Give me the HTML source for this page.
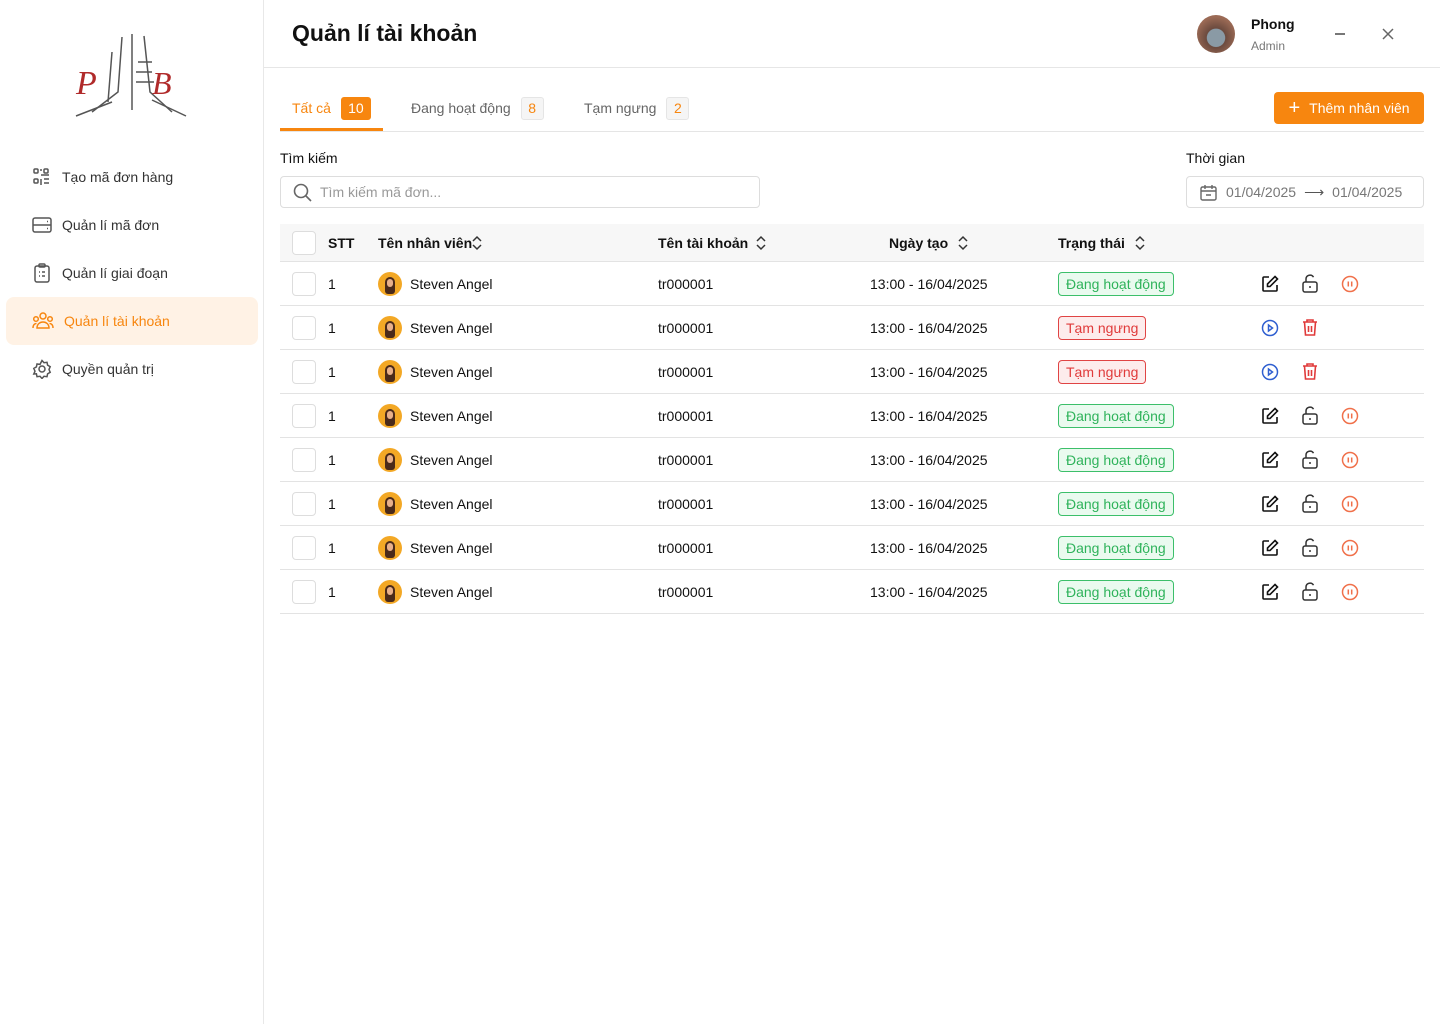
<!DOCTYPE html>
<html><head><meta charset="utf-8"><style>
*{box-sizing:border-box;margin:0;padding:0}
body{width:1440px;height:1024px;font-family:"Liberation Sans",sans-serif;background:#fff;position:relative;overflow:hidden;color:#111}
.abs{position:absolute}
.side{left:0;top:0;width:264px;height:1024px;border-right:1px solid #e8e8e8}
.nav{position:absolute;left:6px;width:252px;height:48px;display:flex;align-items:center;padding-left:26px;font-size:14px;color:#333;border-radius:8px}
.nav svg{margin-right:10px}
.nav.act{background:#FFF2E5;color:#F7860F}
.hdr{left:264px;top:0;width:1176px;height:68px;border-bottom:1px solid #e6e6e6}
.tab{position:absolute;top:96px;font-size:14px;color:#666;display:flex;align-items:center;height:24px}
.cnt{margin-left:10px;min-width:23px;height:23px;border-radius:3px;border:1px solid #e5e5e5;background:#f5f5f5;color:#F7860F;font-size:14px;display:flex;align-items:center;justify-content:center;padding:0 5px}
.row{position:absolute;left:280px;width:1144px;height:44px;border-bottom:1px solid #e3e3e3;font-size:14px;color:#111}
.row>*{position:absolute}
.cb{left:12px;top:10px;width:24px;height:24px;border:1px solid #ddd;border-radius:4px;background:#fff}
.badge{left:778px;top:10px;height:24px;border-radius:4px;font-size:14px;padding:0 7px;line-height:22px}
.g{border:1px solid #3cbf6a;background:#eafaef;color:#2fb35b}
.r{border:1px solid #e04444;background:#fdecec;color:#e03a3a}
.av{left:98px;top:10px;width:24px;height:24px;border-radius:50%;background:#f3a825;overflow:hidden}
</style></head><body>
<div class="abs side">
 <svg class="abs" style="left:72px;top:32px" width="118" height="86" viewBox="0 0 118 86">
  <g stroke="#555" fill="none" stroke-width="1.5"><path d="M50 5 L46 60 L20 80"/><path d="M60 2 L60 78"/><path d="M72 4 L78 60 L100 80"/><path d="M66 30 L80 30 M64 40 L80 40 M64 50 L82 50"/><path d="M40 20 L36 70"/><path d="M4 84 L40 70 M114 84 L80 68"/></g>
  <text x="4" y="62" font-family="Liberation Serif" font-style="italic" font-size="34" fill="#b02a2a">P</text>
  <text x="80" y="62" font-family="Liberation Serif" font-style="italic" font-size="32" fill="#b02a2a">B</text>
 </svg>
 <div class="nav" style="top:153px"><svg width="20" height="20" viewBox="0 0 20 20" fill="none" stroke="#555" stroke-width="1.5"><rect x="2" y="2" width="4" height="4" rx="1"/><rect x="12" y="2" width="4" height="4" rx="1"/><rect x="2" y="12" width="4" height="4" rx="1"/><path d="M9 2v2M9 8h8M12 12h5M12 16h5M9 12v6"/></svg>Tạo mã đơn hàng</div>
 <div class="nav" style="top:201px"><svg width="20" height="20" viewBox="0 0 20 20" fill="none" stroke="#555" stroke-width="1.5"><rect x="1" y="3" width="18" height="14" rx="2"/><path d="M1 10h18M15 6.5h1M15 13.5h1"/></svg>Quản lí mã đơn</div>
 <div class="nav" style="top:249px"><svg width="20" height="20" viewBox="0 0 20 20" fill="none" stroke="#555" stroke-width="1.5"><rect x="3" y="3" width="14" height="16" rx="2"/><rect x="7" y="1" width="6" height="3" rx="1"/><path d="M7 9h1M10 9h3M7 13h1M10 13h3"/></svg>Quản lí giai đoạn</div>
 <div class="nav act" style="top:297px"><svg width="22" height="20" viewBox="0 0 22 20" fill="none" stroke="#F7860F" stroke-width="1.5"><circle cx="11" cy="5" r="3"/><circle cx="4" cy="8" r="2.3"/><circle cx="18" cy="8" r="2.3"/><path d="M5 17c0-4 3-6 6-6s6 2 6 6zM1 17c0-3 1.5-4.5 3.5-4.5M21 17c0-3-1.5-4.5-3.5-4.5"/></svg>Quản lí tài khoản</div>
 <div class="nav" style="top:345px"><svg width="20" height="20" viewBox="0 0 20 20" fill="none" stroke="#555" stroke-width="1.5"><circle cx="10" cy="10" r="3"/><path d="M10 1.5l2 2.2 3-.4.6 2.9 2.6 1.5-1.2 2.8 1.2 2.8-2.6 1.5-.6 2.9-3-.4-2 2.2-2-2.2-3 .4-.6-2.9L1.8 15l1.2-2.8L1.8 9.4l2.6-1.5.6-2.9 3 .4z"/></svg>Quyền quản trị</div>
</div>
<div class="abs hdr">
 <div class="abs" style="left:28px;top:20px;font-size:23px;font-weight:bold;color:#111">Quản lí tài khoản</div>
 <div class="abs" style="left:933px;top:15px;width:38px;height:38px;border-radius:50%;background:radial-gradient(circle at 50% 60%,#8a9aa5 0 30%,#6b4a3e 32%,#9b6a55 70%)"></div>
 <div class="abs" style="left:987px;top:16px;font-size:14px;font-weight:bold">Phong</div>
 <div class="abs" style="left:987px;top:39px;font-size:12px;color:#777">Admin</div>
 <div class="abs" style="left:1071px;top:33px;width:10px;height:1.5px;background:#777"></div>
 <svg class="abs" style="left:1118px;top:28px" width="12" height="12" viewBox="0 0 12 12" stroke="#666" stroke-width="1.5"><path d="M1 1l10 10M11 1L1 11"/></svg>
</div>
<div class="tab" style="left:292px;color:#F7860F">Tất cả<span class="cnt" style="background:#F7860F;color:#fff;border-color:#F7860F;width:30px">10</span></div>
<div class="tab" style="left:411px">Đang hoạt động<span class="cnt">8</span></div>
<div class="tab" style="left:584px">Tạm ngưng<span class="cnt">2</span></div>
<div class="abs" style="left:280px;top:131px;width:1144px;height:1px;background:#e5e5e5"></div>
<div class="abs" style="left:280px;top:128px;width:103px;height:3px;background:#F7860F"></div>
<div class="abs" style="left:1274px;top:92px;width:150px;height:32px;background:#F7860F;border-radius:4px;color:#fff;font-size:14px;display:flex;align-items:center;justify-content:center"><span style="font-size:20px;margin-right:9px;font-weight:300">+</span>Thêm nhân viên</div>
<div class="abs" style="left:280px;top:150px;font-size:14px">Tìm kiếm</div>
<div class="abs" style="left:280px;top:176px;width:480px;height:32px;border:1px solid #ddd;border-radius:4px;font-size:14px;color:#999;padding:7px 0 0 39px">Tìm kiếm mã đơn...
 <svg class="abs" style="left:12px;top:6px" width="19" height="19" viewBox="0 0 19 19" fill="none" stroke="#666" stroke-width="1.6"><circle cx="8" cy="8" r="6.5"/><path d="M13 13l5 5"/></svg></div>
<div class="abs" style="left:1186px;top:150px;font-size:14px">Thời gian</div>
<div class="abs" style="left:1186px;top:176px;width:238px;height:32px;border:1px solid #ddd;border-radius:4px;font-size:14px;color:#777;padding:7px 0 0 39px">01/04/2025<span style="color:#555;margin:0 8px">⟶</span>01/04/2025
 <svg class="abs" style="left:13px;top:7px" width="17" height="17" viewBox="0 0 17 17" fill="none" stroke="#666" stroke-width="1.4"><rect x="1" y="3" width="15" height="13" rx="1.5"/><path d="M1 7h15M5 1v4M12 1v4M6 11h5"/></svg></div>
<div class="row" style="top:224px;height:38px;background:#f7f7f7;border-bottom:1px solid #e3e3e3;font-weight:bold">
 <div class="cb" style="top:7px"></div><div style="left:48px;top:11px">STT</div>
 <div style="left:98px;top:11px">Tên nhân viên</div><div style="left:378px;top:11px">Tên tài khoản</div><div style="left:609px;top:11px">Ngày tạo</div><div style="left:778px;top:11px">Trạng thái</div>
 <svg style="left:192px;top:11px" width="10" height="16" viewBox="0 0 10 16" fill="none" stroke="#333" stroke-width="1.5"><path d="M1 6l4-4 4 4M1 10l4 4 4-4"/></svg>
 <svg style="left:476px;top:11px" width="10" height="16" viewBox="0 0 10 16" fill="none" stroke="#333" stroke-width="1.5"><path d="M1 6l4-4 4 4M1 10l4 4 4-4"/></svg>
 <svg style="left:678px;top:11px" width="10" height="16" viewBox="0 0 10 16" fill="none" stroke="#333" stroke-width="1.5"><path d="M1 6l4-4 4 4M1 10l4 4 4-4"/></svg>
 <svg style="left:855px;top:11px" width="10" height="16" viewBox="0 0 10 16" fill="none" stroke="#333" stroke-width="1.5"><path d="M1 6l4-4 4 4M1 10l4 4 4-4"/></svg>
</div>
<div id="rows"></div>
<script>
var st=['g','r','r','g','g','g','g','g'],h='';
var edit='<svg style="left:981px;top:13px" width="18" height="18" viewBox="0 0 18 18" fill="none" stroke="#111" stroke-width="1.6"><path d="M8 2H3a1 1 0 0 0-1 1v12a1 1 0 0 0 1 1h12a1 1 0 0 0 1-1v-5"/><path d="M14 1.5l2.5 2.5L9 11.5H6.5V9z"/></svg>';
var lock='<svg style="left:1021px;top:12px" width="18" height="19" viewBox="0 0 18 19" fill="none" stroke="#333" stroke-width="1.5"><rect x="2" y="8" width="14" height="10" rx="2"/><path d="M5 8V5a4 4 0 0 1 7.5-1.8M9 12v2"/></svg>';
var pause='<svg style="left:1061px;top:13px" width="18" height="18" viewBox="0 0 18 18" fill="none" stroke="#F0704A" stroke-width="1.5"><circle cx="9" cy="9" r="7.5"/><path d="M7.3 6.5v5M10.7 6.5v5"/></svg>';
var play='<svg style="left:981px;top:13px" width="18" height="18" viewBox="0 0 18 18" fill="none" stroke="#2f5fd0" stroke-width="1.5"><circle cx="9" cy="9" r="7.5"/><path d="M7.5 6l4 3-4 3z"/></svg>';
var del='<svg style="left:1021px;top:12px" width="18" height="19" viewBox="0 0 18 19" fill="none" stroke="#e03a3a" stroke-width="1.6"><path d="M2 4h14M6 4V2h6v2M3.5 4l1 13h9l1-13M7.5 8v6M10.5 8v6"/></svg>';
for(var i=0;i<8;i++){h+='<div class="row" style="top:'+(262+i*44)+'px"><div class="cb"></div><div style="left:48px;top:14px">1</div><div class="av"><div style="position:absolute;left:7px;top:5px;width:10px;height:17px;border-radius:5px 5px 3px 3px;background:#4a2a1a"></div><div style="position:absolute;left:9px;top:7px;width:6px;height:8px;border-radius:3px;background:#e8b08a"></div></div><div style="left:130px;top:14px">Steven Angel</div><div style="left:378px;top:14px">tr000001</div><div style="left:590px;top:14px">13:00 - 16/04/2025</div>'+(st[i]=='g'?'<div class="badge g">Đang hoạt động</div>'+edit+lock+pause:'<div class="badge r">Tạm ngưng</div>'+play+del)+'</div>';}
document.getElementById('rows').innerHTML=h;
</script>
</body></html>
